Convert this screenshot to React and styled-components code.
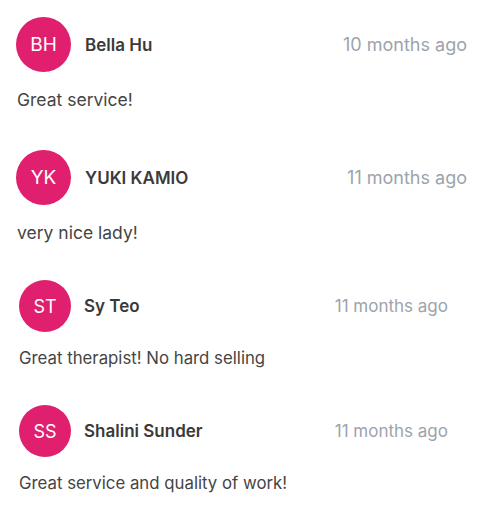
import React from 'react'
import styled, { createGlobalStyle } from 'styled-components'

const GlobalStyle = createGlobalStyle`
  body {
    margin: 0;
    background: #fff;
    font-family: Inter, "Noto Sans", sans-serif;
  }
`

const List = styled.div`
  display: flex;
  flex-direction: column;
  gap: 35px;
  padding-top: 17px;
`

const Review = styled.div`
  display: flex;
  flex-direction: column;
  padding: ${p => p.$lg ? '0 30px 0 16px' : '0 49px 0 19px'};

  &:first-child {
    margin-bottom: 3px;
  }
`

const Header = styled.div`
  display: flex;
  align-items: center;
`

const Avatar = styled.div`
  width: ${p => p.$lg ? '55px' : '52px'};
  height: ${p => p.$lg ? '55px' : '52px'};
  border-radius: 50%;
  background: #e0206e;
  color: #fff;
  display: flex;
  align-items: center;
  justify-content: center;
  font-size: ${p => p.$lg ? '19px' : '18px'};
  flex-shrink: 0;
`

const Name = styled.div`
  flex: 1;
  margin-left: ${p => p.$lg ? '14px' : '13px'};
  font-size: 17px;
  font-weight: 600;
  color: #3a3a3a;
`

const Time = styled.div`
  font-size: ${p => p.$lg ? '18px' : '17px'};
  color: #9ca3ad;
`

const Body = styled.p`
  margin: ${p => p.$lg ? '16px 0 0 1px' : '15px 0 0'};
  font-size: ${p => p.$lg ? '17.5px' : '16.8px'};
  line-height: ${p => p.$lg ? '24px' : '23px'};
  color: #454545;
`

const reviews = [
  { initials: 'BH', name: 'Bella Hu', time: '10 months ago', text: 'Great service!', lg: true },
  { initials: 'YK', name: 'YUKI KAMIO', time: '11 months ago', text: 'very nice lady!', lg: true },
  { initials: 'ST', name: 'Sy Teo', time: '11 months ago', text: 'Great therapist! No hard selling' },
  { initials: 'SS', name: 'Shalini Sunder', time: '11 months ago', text: 'Great service and quality of work!' },
]

export default function App() {
  return (
    <>
      <GlobalStyle />
      <List>
        {reviews.map(r => (
          <Review key={r.initials} $lg={r.lg}>
            <Header>
              <Avatar $lg={r.lg}>{r.initials}</Avatar>
              <Name $lg={r.lg}>{r.name}</Name>
              <Time $lg={r.lg}>{r.time}</Time>
            </Header>
            <Body $lg={r.lg}>{r.text}</Body>
          </Review>
        ))}
      </List>
    </>
  )
}
